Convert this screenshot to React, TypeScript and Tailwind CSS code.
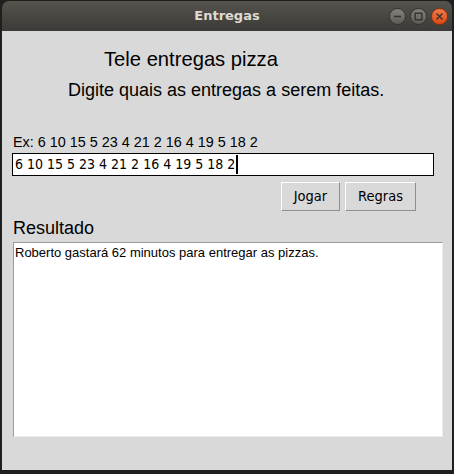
import React from "react";

const arial = { fontFamily: '"Liberation Sans", Arial, sans-serif' };
const tkFont = { fontFamily: '"DejaVu Sans Condensed", "DejaVu Sans", sans-serif' };

function WindowButton({ kind }: { kind: "min" | "max" | "close" }) {
  const isClose = kind === "close";
  return (
    <div
      className={
        "flex h-[17px] w-[17px] items-center justify-center rounded-full border " +
        (isClose
          ? "border-[#8a3410] bg-gradient-to-b from-[#f37a45] to-[#dd4814]"
          : "border-[#34332f] bg-gradient-to-b from-[#85837e] to-[#5c5b56]")
      }
    >
      <svg width="9" height="9" viewBox="0 0 9 9" fill="none" stroke="#34332f" strokeWidth="1.4">
        {kind === "min" && <path d="M1 4.5h7" />}
        {kind === "max" && <rect x="1.2" y="1.2" width="6.6" height="6.6" />}
        {kind === "close" && <path d="M1.5 1.5l6 6M7.5 1.5l-6 6" />}
      </svg>
    </div>
  );
}

export default function App() {
  return (
    <div className="h-[474px] w-[454px] overflow-hidden bg-[#1f1f1f] pl-[2px] pt-[1px]">
      <div className="w-[450px] overflow-hidden rounded-t-[7px]">
        {/* title bar */}
        <div className="relative flex h-[30px] items-center justify-center bg-gradient-to-b from-[#56534d] to-[#3c3b37]">
          <span className="text-[13px] font-bold text-[#dfdbd2]" style={{ fontFamily: '"DejaVu Sans", sans-serif' }}>
            Entregas
          </span>
          <div className="absolute right-[4px] top-[7px] flex gap-[4px]">
            <WindowButton kind="min" />
            <WindowButton kind="max" />
            <WindowButton kind="close" />
          </div>
        </div>

        {/* content */}
        <div className="flex h-[439px] flex-col bg-[#d9d9d9] text-black" style={arial}>
          <div className="ml-[102px] mt-[17px] text-[20.2px] leading-[23px]">Tele entregas pizza</div>
          <div className="ml-[66px] mt-[9px] text-[18px] leading-[21px]">Digite quais as entregas a serem feitas.</div>
          <div className="ml-[11px] mt-[33px] text-[14.4px] leading-[17px]">Ex: 6 10 15 5 23 4 21 2 16 4 19 5 18 2</div>

          <div className="ml-[10px] mt-[2px] flex h-[23px] w-[422px] items-center border border-black bg-white pl-[2px]">
            <span className="text-[14px] leading-[17px]" style={tkFont}>
              6 10 15 5 23 4 21 2 16 4 19 5 18 2
            </span>
            <span className="ml-[1px] h-[19px] w-[2px] bg-black" />
          </div>

          <div className="mr-[36px] mt-[6px] flex justify-end gap-[5px]" style={tkFont}>
            <button
              type="button"
              className="h-[29px] w-[59px] border border-b-[#8f8f8f] border-l-white border-r-[#8f8f8f] border-t-white bg-[#d9d9d9] text-[14.5px]"
            >
              Jogar
            </button>
            <button
              type="button"
              className="h-[29px] w-[71px] border border-b-[#8f8f8f] border-l-white border-r-[#8f8f8f] border-t-white bg-[#d9d9d9] text-[14.5px]"
            >
              Regras
            </button>
          </div>

          <div className="ml-[11px] mt-[7px] text-[18px] leading-[21px]">Resultado</div>

          <div className="ml-[11px] mt-[3px] h-[195px] w-[430px] border border-b-[#ececec] border-l-[#9a9a9a] border-r-[#ececec] border-t-[#9a9a9a] bg-white px-[1px] pt-[2px]">
            <div className="text-[13px] leading-[15px]">Roberto gastará 62 minutos para entregar as pizzas.</div>
          </div>
        </div>
      </div>
    </div>
  );
}
